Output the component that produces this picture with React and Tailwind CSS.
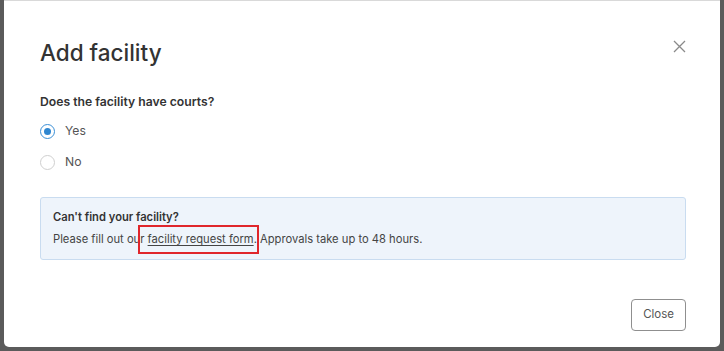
import React, { useState } from 'react'

export default function App() {
  const [hasCourts, setHasCourts] = useState('yes')

  return (
    <div className="h-[351px] w-[724px] bg-[#5b5b5b] px-[4px] pb-[4px] font-['Inter',sans-serif] overflow-hidden">
      <div className="flex h-full flex-col rounded-b-[5px] border-t border-[#d9d9d9] bg-white">
        {/* Header */}
        <div className="flex items-start justify-between pl-[36px] pr-[34px] pt-[37px]">
          <h1 className="text-[22.5px] font-medium leading-[30px] text-[#333]">Add facility</h1>
          <button type="button" className="mt-[2px] text-[#8a8a8a]">
            <svg width="13" height="13" viewBox="0 0 13 13" fill="none" stroke="currentColor" strokeWidth="1.3">
              <path d="M1 1L12 12M12 1L1 12" />
            </svg>
          </button>
        </div>

        {/* Body */}
        <div className="pl-[36px] pr-[34px] pt-[26px]">
          <p className="text-[12.2px] font-semibold leading-[16px] text-[#333]">Does the facility have courts?</p>
          <div className="mt-[13px] flex flex-col gap-[15px]">
            {[
              ['yes', 'Yes'],
              ['no', 'No'],
            ].map(([value, label]) => (
              <label key={value} className="flex items-center gap-[10px] text-[12.2px] leading-[16px] text-[#555]">
                <span
                  onClick={() => setHasCourts(value)}
                  className={
                    hasCourts === value
                      ? 'flex h-[15px] w-[15px] items-center justify-center rounded-full border border-[#3a8fd6]'
                      : 'flex h-[15px] w-[15px] items-center justify-center rounded-full border border-[#cfcfcf]'
                  }
                >
                  {hasCourts === value && <span className="h-[7px] w-[7px] rounded-full bg-[#2e86d0]"></span>}
                </span>
                {label}
              </label>
            ))}
          </div>

          <div className="mt-[27px] rounded-[3px] border border-[#c9dcf0] bg-[#eef4fb] px-[12px] pb-[12px] pt-[11px] text-[11.2px] text-[#444]">
            <p className="font-semibold leading-[16px] text-[#333]">Can't find your facility?</p>
            <p className="mt-[6px] leading-[16px]">
              Please fill out ou
              <span className="relative">
                r{' '}
                <a href="#" className="underline underline-offset-2">facility request form</a>
                <span className="pointer-events-none absolute left-[-2px] right-[-5px] top-[-7px] bottom-[-8px] border-2 border-[#e0262b]"></span>
              </span>
              . Approvals take up to 48 hours.
            </p>
          </div>
        </div>

        {/* Footer */}
        <div className="mt-auto flex justify-end px-[34px] pb-[16px]">
          <button type="button" className="h-[32px] rounded-[4px] border border-[#8f8f8f] px-[11px] text-[11.5px] text-[#555]">
            Close
          </button>
        </div>
      </div>
    </div>
  )
}
